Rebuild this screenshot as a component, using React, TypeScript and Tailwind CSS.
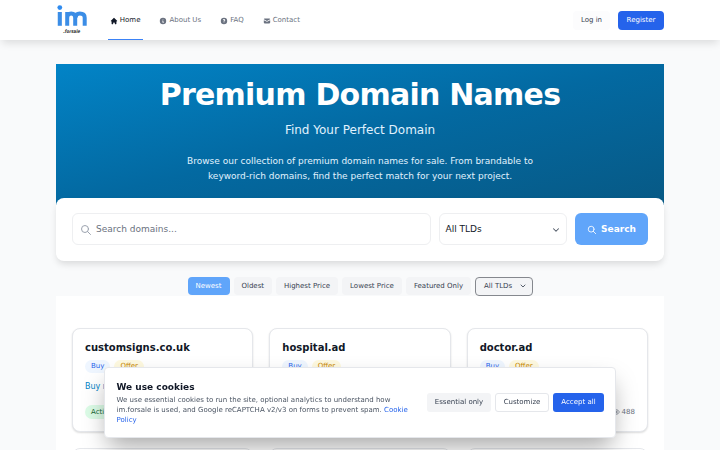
import { ChevronDown, Eye } from 'lucide-react';
import { HiHome, HiInformationCircle, HiMail, HiOutlineSearch, HiQuestionMarkCircle } from 'react-icons/hi';

const navItems = [
  { label: 'Home', icon: HiHome, active: true },
  { label: 'About Us', icon: HiInformationCircle },
  { label: 'FAQ', icon: HiQuestionMarkCircle },
  { label: 'Contact', icon: HiMail },
];

const filters = [
  { label: 'Oldest', width: 'w-[38.5px]' },
  { label: 'Highest Price', width: 'w-[62px]' },
  { label: 'Lowest Price', width: 'w-[60px]' },
  { label: 'Featured Only', width: 'w-[65px]' },
];

const domains = [
  { name: 'customsigns.co.uk', views: 512 },
  { name: 'hospital.ad', views: 475 },
  { name: 'doctor.ad', views: 488 },
];

function Logo() {
  return (
    <svg viewBox="0 0 32 32" className="h-8 w-8 shrink-0">
      <circle cx="3.8" cy="3.6" r="2.4" fill="#2f8bef" />
      <path d="M3.8 8v13.8" stroke="#3b8de6" strokeWidth="4.1" />
      <path
        d="M11.2 21.8V8M11.2 13.8c0-2.8 1.5-4.2 4-4.2s4 1.3 4 4.2v8M19.6 13.8c0-2.8 1.5-4.2 4.2-4.2s4.9 1.3 4.9 4.2v8"
        fill="none"
        stroke="#3b8de6"
        strokeWidth="4"
      />
      <text x="15.8" y="28.9" textAnchor="middle" fontSize="4.8" fontWeight="700" fontStyle="italic" fill="#333" textLength="17" lengthAdjust="spacingAndGlyphs">
        .forsale
      </text>
    </svg>
  );
}

function Header() {
  return (
    <header className="relative z-10 flex h-10 items-center bg-white px-14 shadow-[0_5px_8px_-2px_rgba(0,0,0,0.12)]">
      <Logo />
      <nav className="ml-5 flex h-10 gap-[15px]">
        {navItems.map(({ label, icon: Icon, active }) => (
          <a
            key={label}
            className={`relative flex items-center pt-px pr-[2.2px] pl-[1.8px] text-[7px] font-medium ${
              active ? 'text-[#111827]' : 'text-[#6b7280]'
            }`}
          >
            <Icon className="mr-[2px] size-2" />
            {label}
            {active && <span className="absolute inset-x-0 bottom-0 h-[1.5px] bg-[#3b82f6]" />}
          </a>
        ))}
      </nav>
      <div className="ml-auto flex gap-2 text-[7px] font-medium">
        <button className="h-[19px] w-[37px] rounded-[4px] bg-[#fcfcfd] text-[#374151]">Log in</button>
        <button className="h-[19px] w-[46px] rounded-[4px] bg-[#2563eb] text-white">Register</button>
      </div>
    </header>
  );
}

function DomainCard({ name, views }: { name: string; views: number }) {
  return (
    <div className="h-[104px] rounded-lg border border-[#e5e7eb] bg-white px-3 pt-3 shadow-[0_1px_2px_rgba(0,0,0,0.14)]">
      <h3 className="text-[10px] leading-[14px] font-bold text-[#111827]">{name}</h3>
      <div className="mt-[5px] flex gap-1 text-[7px] font-medium">
        <span className="flex h-[13px] items-center rounded-full bg-[#eff6ff] px-1.5 text-[#2563eb]">Buy</span>
        <span className="flex h-[13px] items-center rounded-full bg-[#fef9e0] px-1.5 text-[#ca8a04]">Offer</span>
      </div>
      <p className="mt-2 text-[8px] leading-3 text-[#0284c7]">Buy now</p>
      <div className="mt-3 flex items-center justify-between text-[7px]">
        <span className="flex h-[14px] items-center rounded-full bg-[#dcfce7] px-1.5 font-medium text-[#166534]">Active</span>
        <span className="flex items-center gap-0.5 text-[#6b7280]">
          <Eye className="size-2" />
          {views}
        </span>
      </div>
    </div>
  );
}

function CookieBanner() {
  return (
    <div className="fixed bottom-3 left-[104px] z-20 flex h-[71px] w-[512px] items-center rounded-[4px] border border-[#e5e7eb] bg-white pr-[11px] pl-[11.5px] shadow-[0_12px_25px_-4px_rgba(0,0,0,0.35)]">
      <div className="w-[298px]">
        <h2 className="text-[9px] leading-[14px] font-semibold text-[#111827]">We use cookies</h2>
        <p className="mt-px text-[7px] leading-[10px] text-[#4b5563]">
          We use essential cookies to run the site, optional analytics to understand how
          <br />
          im.forsale is used, and Google reCAPTCHA v2/v3 on forms to prevent spam.{' '}
          <a className="text-[#2563eb]">
            Cookie
            <br />
            Policy
          </a>
        </p>
      </div>
      <div className="ml-auto flex gap-1 text-[7px] font-medium">
        <button className="h-[19px] w-16 rounded-[3px] bg-[#f3f4f6] text-[#374151]">Essential only</button>
        <button className="h-[19px] w-[54px] rounded-[3px] border border-[#e5e7eb] bg-white text-[#374151]">Customize</button>
        <button className="h-[19px] w-[51px] rounded-[3px] bg-[#2563eb] text-white">Accept all</button>
      </div>
    </div>
  );
}

export default function App() {
  return (
    <div className="h-[450px] overflow-hidden bg-[#f9fafb] font-['DejaVu_Sans',sans-serif]">
      <Header />
      <main className="mx-14 mt-6">
        <section className="h-[141px] bg-linear-to-br from-[#0284c7] via-[#0369a1] to-[#075985] pt-3 text-center text-white">
          <h1 className="text-[30px] leading-[37px] font-bold tracking-[-0.75px]">Premium Domain Names</h1>
          <p className="mt-[9px] text-[12px] leading-4 text-[#e0f2fe]">Find Your Perfect Domain</p>
          <p className="mt-4 text-[9px] leading-[14.6px] text-[#e0f2fe]">
            Browse our collection of premium domain names for sale. From brandable to
            <br />
            keyword-rich domains, find the perfect match for your next project.
          </p>
        </section>

        <section className="relative -mt-[7.5px] flex h-[63px] items-center gap-2 rounded-lg bg-white px-4 text-[9px] shadow-[0_4px_7px_-1px_rgba(0,0,0,0.13)]">
          <div className="flex h-8 flex-1 items-center gap-1 rounded-md border border-[#eeeff1] px-[7px] pt-px text-[#6b7280]">
            <HiOutlineSearch className="size-3 text-[#9ca3af]" />
            Search domains...
          </div>
          <div className="flex h-8 w-32 items-center justify-between rounded-md border border-[#eeeff1] pt-px pr-[5px] pl-[5.5px] text-[#111827]">
            All TLDs
            <ChevronDown className="size-[10px] text-[#4b5563]" strokeWidth={2.5} />
          </div>
          <button className="flex h-8 w-[73px] items-center justify-center gap-1 rounded-md bg-[#60a5fa] pt-px font-semibold text-white">
            <HiOutlineSearch className="size-2.5" />
            Search
          </button>
        </section>

        <div className="mt-[15.5px] flex h-5 items-center justify-center gap-1 text-[7px] font-medium text-[#374151]">
          <button className="h-[18px] w-[42px] rounded-[4px] bg-[#60a5fa] text-white">Newest</button>
          {filters.map((filter) => (
            <button key={filter.label} className={`h-[18px] rounded-[4px] bg-[#f3f4f6] ${filter.width}`}>
              {filter.label}
            </button>
          ))}
          <div className="flex h-[19px] w-[57.5px] items-center justify-between rounded-[4px] border border-[#85888e] bg-[#f3f4f6] pr-[5px] pl-2">
            All TLDs
            <ChevronDown className="size-[8px]" strokeWidth={2.5} />
          </div>
        </div>

        <section className="grid grid-cols-3 gap-4 bg-white px-4 pt-8 pb-4">
          {domains.map((domain) => (
            <DomainCard key={domain.name} {...domain} />
          ))}
          {/* next row only peeks above the fold */}
          {domains.map((domain) => (
            <div key={`next-${domain.name}`} className="h-[104px] rounded-lg border border-[#e5e7eb] bg-white" />
          ))}
        </section>
      </main>
      <CookieBanner />
    </div>
  );
}
